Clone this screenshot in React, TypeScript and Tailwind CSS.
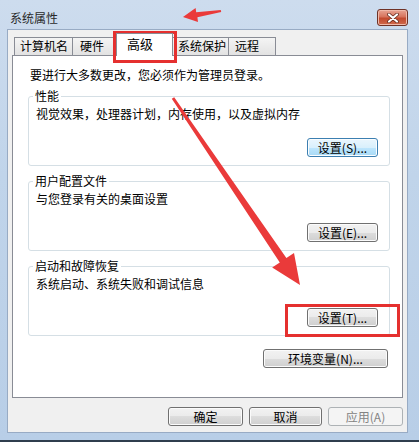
const btnBase =
  "flex h-[19px] items-center justify-center rounded-[3px] border text-[12px] leading-[16px]"
const btnNormal =
  "border-[#707070] bg-[linear-gradient(#f2f2f2_0%,#ebebeb_50%,#dddddd_50%,#cfcfcf_100%)] shadow-[inset_0_0_0_1px_#fbfbfb] text-black"
const btnFocus =
  "border-[#3c7fb1] bg-[linear-gradient(#eaf6fd_0%,#d9f0fc_50%,#bee6fd_50%,#a7d9f5_100%)] shadow-[inset_0_0_0_1px_#fbfdff] text-black"
const btnDisabled = "border-[#adb2b5] bg-[#f4f4f4] text-[#838383]"

const Btn = ({ label, w, kind = "normal" }: { label: string; w: string; kind?: "normal" | "focus" | "disabled" }) => {
  const look = kind === "focus" ? btnFocus : kind === "disabled" ? btnDisabled : btnNormal
  return <div className={`${btnBase} ${look} ${w}`}>{label}</div>
}

const GroupBox = ({ title, desc, btn, focus, first }: { title: string; desc: string; btn: string; focus?: boolean; first?: boolean }) => (
  <fieldset className={`rounded-[3px] border border-[#d5dfe5] ${first ? "mt-[5px]" : "mt-[7px]"}`}>
    <legend className="ml-[4px] px-[2px]">{title}</legend>
    <div className="mt-[2px] pl-[7px]">{desc}</div>
    <div className="mt-[16px] flex justify-end pb-[8px] pr-[11px]">
      <Btn label={btn} w="w-[71px]" kind={focus ? "focus" : "normal"} />
    </div>
  </fieldset>
)

const tabs = [
  { label: "计算机名", cls: "w-[59px] pl-[5px]" },
  { label: "硬件", cls: "w-[45px] pl-[7px]" },
  { label: "高级", selected: true, cls: "" },
  { label: "系统保护", cls: "w-[57px] pl-[5px]" },
  { label: "远程", cls: "w-[48px] pl-[6px]" },
]

const CloseBtn = () => (
  <div className="mr-[11px] mt-[9px] flex h-[17px] w-[31px] items-center justify-center rounded-[3px] border border-[#6e3226] bg-[linear-gradient(#e8a493_0%,#d7745d_45%,#c24a2f_55%,#cf6a4c_100%)] shadow-[inset_0_0_0_1px_#f0b9a9]">
    <svg width="12" height="10" viewBox="0 0 12 10">
      <path d="M2 1.5 L10 8.5 M10 1.5 L2 8.5" stroke="#5a2418" strokeWidth="3.6" strokeLinecap="round" />
      <path d="M2 1.5 L10 8.5 M10 1.5 L2 8.5" stroke="#ffffff" strokeWidth="2.2" strokeLinecap="round" />
    </svg>
  </div>
)

export default function App() {
  return (
    <div className="relative h-[442px] w-[419px] overflow-hidden border-b-2 border-[#2f3d4d] bg-[linear-gradient(180deg,#cddcee_0%,#c0d4ea_40%,#b8cee7_100%)] font-['Noto_Sans_CJK_SC',sans-serif] text-[12px] leading-[16px] text-black">
      {/* title bar */}
      <div className="flex h-[29px] items-start justify-between">
        <span className="ml-[10px] mt-[10px] text-[#2a2a2a]">系统属性</span>
        <CloseBtn />
      </div>

      {/* client area */}
      <div className="ml-[7px] h-[404px] w-[401px] border border-[#98abc4] bg-[#f0f0f0] px-[4px] pt-[3px]">
        {/* tabs */}
        <div className="flex h-[22px] items-end pl-[2px]">
          {tabs.map((t, i) =>
            t.selected ? (
              <div
                key={t.label}
                className="relative z-10 -mb-px -ml-px h-[23px] w-[57px] border border-b-0 border-[#898c95] bg-white pl-[10px] pt-[2px] text-[13px]"
              >
                {t.label}
              </div>
            ) : (
              <div
                key={t.label}
                className={`h-[18px] border border-b-0 border-[#898c95] bg-[linear-gradient(#f4f4f4,#e2e2e2)] ${i > 0 ? "-ml-px" : ""} ${t.cls}`}
              >
                {t.label}
              </div>
            )
          )}
        </div>

        {/* tab panel */}
        <div className="h-[343px] w-[391px] border border-[#898c95] bg-white pl-[15px] pr-[12px] pt-[11px]">
          <div className="ml-[2px]">要进行大多数更改，您必须作为管理员登录。</div>

          <GroupBox first title="性能" desc="视觉效果，处理器计划，内存使用，以及虚拟内存" btn="设置(S)..." focus />
          <GroupBox title="用户配置文件" desc="与您登录有关的桌面设置" btn="设置(E)..." />
          <GroupBox title="启动和故障恢复" desc="系统启动、系统失败和调试信息" btn="设置(T)..." />

          <div className="mt-[13px] flex justify-end pr-[2px]">
            <Btn label="环境变量(N)..." w="w-[125px]" />
          </div>
        </div>

        {/* dialog buttons */}
        <div className="mt-[9px] flex justify-end gap-[6px]">
          <Btn label="确定" w="w-[75px]" />
          <Btn label="取消" w="w-[73px]" />
          <Btn label="应用(A)" w="w-[75px]" kind="disabled" />
        </div>
      </div>

      {/* annotations */}
      <div className="absolute left-[113px] top-[31px] h-[32px] w-[64px] border-[3px] border-[#e5302f]" />
      <div className="absolute left-[285px] top-[304px] h-[33px] w-[115px] border-[3px] border-[#e5302f]" />
      <svg className="pointer-events-none absolute left-0 top-0" width="419" height="442" viewBox="0 0 419 442">
        <polygon
          fill="#ea3a3a"
          points="174.2,97.2 286.4,258 294,253 300,285 272.2,267.5 279.8,262.4 171.8,98.8"
        />
        <polygon
          fill="#ea3a3a"
          points="221.2,12 197.4,17.3 198,22 183,17 195.6,8 196.2,12.3 220.8,10"
        />
      </svg>
    </div>
  )
}
